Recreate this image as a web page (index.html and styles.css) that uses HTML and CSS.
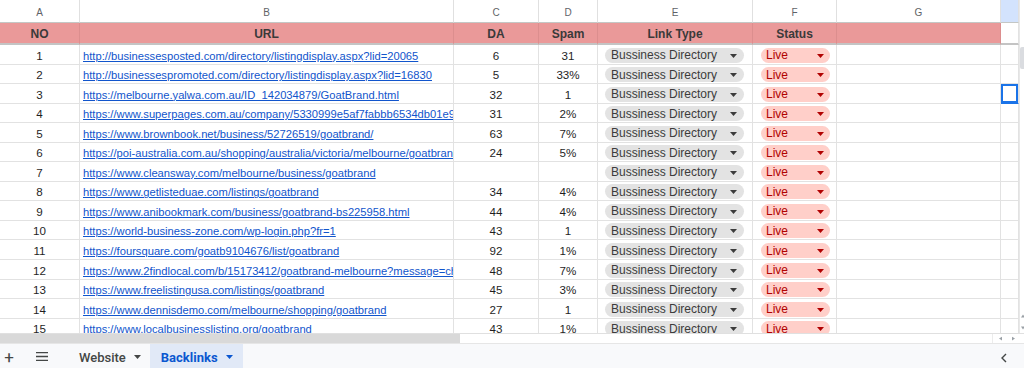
FILE: index.html
```html
<!DOCTYPE html>
<html>
<head>
<meta charset="utf-8">
<link rel="stylesheet" href="styles.css">
</head>
<body>
<div class="app">
  <div class="sheet">
    <div class="grid">
      <div class="c col">A</div><div class="c col">B</div><div class="c col">C</div><div class="c col">D</div><div class="c col">E</div><div class="c col">F</div><div class="c col">G</div><div class="c col col-sel"></div>

      <div class="c hd">NO</div><div class="c hd">URL</div><div class="c hd">DA</div><div class="c hd">Spam</div><div class="c hd">Link Type</div><div class="c hd">Status</div><div class="c hd"></div><div class="c hd hd-blank"></div>

      <div class="c num">1</div><div class="c url"><a>http://businessesposted.com/directory/listingdisplay.aspx?lid=20065</a></div><div class="c num">6</div><div class="c num">31</div><div class="c lt"><span class="chip gray">Bussiness Directory<svg viewBox="0 0 7 4"><path d="M0 0h7L3.5 4z"/></svg></span></div><div class="c st"><span class="chip red">Live<svg viewBox="0 0 7 4"><path d="M0 0h7L3.5 4z"/></svg></span></div><div class="c"></div><div class="c"></div>

      <div class="c num">2</div><div class="c url"><a>http://businessespromoted.com/directory/listingdisplay.aspx?lid=16830</a></div><div class="c num">5</div><div class="c num">33%</div><div class="c lt"><span class="chip gray">Bussiness Directory<svg viewBox="0 0 7 4"><path d="M0 0h7L3.5 4z"/></svg></span></div><div class="c st"><span class="chip red">Live<svg viewBox="0 0 7 4"><path d="M0 0h7L3.5 4z"/></svg></span></div><div class="c"></div><div class="c"></div>

      <div class="c num">3</div><div class="c url"><a>https://melbourne.yalwa.com.au/ID_142034879/GoatBrand.html</a></div><div class="c num">32</div><div class="c num">1</div><div class="c lt"><span class="chip gray">Bussiness Directory<svg viewBox="0 0 7 4"><path d="M0 0h7L3.5 4z"/></svg></span></div><div class="c st"><span class="chip red">Live<svg viewBox="0 0 7 4"><path d="M0 0h7L3.5 4z"/></svg></span></div><div class="c"></div><div class="c sel"></div>

      <div class="c num">4</div><div class="c url"><a>https://www.superpages.com.au/company/5330999e5af7fabbb6534db01e9</a></div><div class="c num">31</div><div class="c num">2%</div><div class="c lt"><span class="chip gray">Bussiness Directory<svg viewBox="0 0 7 4"><path d="M0 0h7L3.5 4z"/></svg></span></div><div class="c st"><span class="chip red">Live<svg viewBox="0 0 7 4"><path d="M0 0h7L3.5 4z"/></svg></span></div><div class="c"></div><div class="c"></div>

      <div class="c num">5</div><div class="c url"><a>https://www.brownbook.net/business/52726519/goatbrand/</a></div><div class="c num">63</div><div class="c num">7%</div><div class="c lt"><span class="chip gray">Bussiness Directory<svg viewBox="0 0 7 4"><path d="M0 0h7L3.5 4z"/></svg></span></div><div class="c st"><span class="chip red">Live<svg viewBox="0 0 7 4"><path d="M0 0h7L3.5 4z"/></svg></span></div><div class="c"></div><div class="c"></div>

      <div class="c num">6</div><div class="c url"><a>https://poi-australia.com.au/shopping/australia/victoria/melbourne/goatbrand</a></div><div class="c num">24</div><div class="c num">5%</div><div class="c lt"><span class="chip gray">Bussiness Directory<svg viewBox="0 0 7 4"><path d="M0 0h7L3.5 4z"/></svg></span></div><div class="c st"><span class="chip red">Live<svg viewBox="0 0 7 4"><path d="M0 0h7L3.5 4z"/></svg></span></div><div class="c"></div><div class="c"></div>

      <div class="c num">7</div><div class="c url"><a>https://www.cleansway.com/melbourne/business/goatbrand</a></div><div class="c num"></div><div class="c num"></div><div class="c lt"><span class="chip gray">Bussiness Directory<svg viewBox="0 0 7 4"><path d="M0 0h7L3.5 4z"/></svg></span></div><div class="c st"><span class="chip red">Live<svg viewBox="0 0 7 4"><path d="M0 0h7L3.5 4z"/></svg></span></div><div class="c"></div><div class="c"></div>

      <div class="c num">8</div><div class="c url"><a>https://www.getlisteduae.com/listings/goatbrand</a></div><div class="c num">34</div><div class="c num">4%</div><div class="c lt"><span class="chip gray">Bussiness Directory<svg viewBox="0 0 7 4"><path d="M0 0h7L3.5 4z"/></svg></span></div><div class="c st"><span class="chip red">Live<svg viewBox="0 0 7 4"><path d="M0 0h7L3.5 4z"/></svg></span></div><div class="c"></div><div class="c"></div>

      <div class="c num">9</div><div class="c url"><a>https://www.anibookmark.com/business/goatbrand-bs225958.html</a></div><div class="c num">44</div><div class="c num">4%</div><div class="c lt"><span class="chip gray">Bussiness Directory<svg viewBox="0 0 7 4"><path d="M0 0h7L3.5 4z"/></svg></span></div><div class="c st"><span class="chip red">Live<svg viewBox="0 0 7 4"><path d="M0 0h7L3.5 4z"/></svg></span></div><div class="c"></div><div class="c"></div>

      <div class="c num">10</div><div class="c url"><a>https://world-business-zone.com/wp-login.php?fr=1</a></div><div class="c num">43</div><div class="c num">1</div><div class="c lt"><span class="chip gray">Bussiness Directory<svg viewBox="0 0 7 4"><path d="M0 0h7L3.5 4z"/></svg></span></div><div class="c st"><span class="chip red">Live<svg viewBox="0 0 7 4"><path d="M0 0h7L3.5 4z"/></svg></span></div><div class="c"></div><div class="c"></div>

      <div class="c num">11</div><div class="c url"><a>https://foursquare.com/goatb9104676/list/goatbrand</a></div><div class="c num">92</div><div class="c num">1%</div><div class="c lt"><span class="chip gray">Bussiness Directory<svg viewBox="0 0 7 4"><path d="M0 0h7L3.5 4z"/></svg></span></div><div class="c st"><span class="chip red">Live<svg viewBox="0 0 7 4"><path d="M0 0h7L3.5 4z"/></svg></span></div><div class="c"></div><div class="c"></div>

      <div class="c num">12</div><div class="c url"><a>https://www.2findlocal.com/b/15173412/goatbrand-melbourne?message=check</a></div><div class="c num">48</div><div class="c num">7%</div><div class="c lt"><span class="chip gray">Bussiness Directory<svg viewBox="0 0 7 4"><path d="M0 0h7L3.5 4z"/></svg></span></div><div class="c st"><span class="chip red">Live<svg viewBox="0 0 7 4"><path d="M0 0h7L3.5 4z"/></svg></span></div><div class="c"></div><div class="c"></div>

      <div class="c num">13</div><div class="c url"><a>https://www.freelistingusa.com/listings/goatbrand</a></div><div class="c num">45</div><div class="c num">3%</div><div class="c lt"><span class="chip gray">Bussiness Directory<svg viewBox="0 0 7 4"><path d="M0 0h7L3.5 4z"/></svg></span></div><div class="c st"><span class="chip red">Live<svg viewBox="0 0 7 4"><path d="M0 0h7L3.5 4z"/></svg></span></div><div class="c"></div><div class="c"></div>

      <div class="c num">14</div><div class="c url"><a>https://www.dennisdemo.com/melbourne/shopping/goatbrand</a></div><div class="c num">27</div><div class="c num">1</div><div class="c lt"><span class="chip gray">Bussiness Directory<svg viewBox="0 0 7 4"><path d="M0 0h7L3.5 4z"/></svg></span></div><div class="c st"><span class="chip red">Live<svg viewBox="0 0 7 4"><path d="M0 0h7L3.5 4z"/></svg></span></div><div class="c"></div><div class="c"></div>

      <div class="c num">15</div><div class="c url"><a>https://www.localbusinesslisting.org/goatbrand</a></div><div class="c num">43</div><div class="c num">1%</div><div class="c lt"><span class="chip gray">Bussiness Directory<svg viewBox="0 0 7 4"><path d="M0 0h7L3.5 4z"/></svg></span></div><div class="c st"><span class="chip red">Live<svg viewBox="0 0 7 4"><path d="M0 0h7L3.5 4z"/></svg></span></div><div class="c"></div><div class="c"></div>
    </div>
    <div class="vscroll">
      <div class="vthumb"></div>
      <div class="varrows">
        <svg viewBox="0 0 5 4"><path d="M0 4h5L2.5 0z"/></svg>
        <svg viewBox="0 0 5 4"><path d="M0 0h5L2.5 4z"/></svg>
      </div>
    </div>
  </div>
  <div class="hscroll">
    <div class="hthumb"></div>
    <div class="harrows">
      <svg viewBox="0 0 4 5"><path d="M4 0v5L0 2.5z"/></svg>
      <svg viewBox="0 0 4 5"><path d="M0 0v5L4 2.5z"/></svg>
    </div>
  </div>
  <div class="tabs">
    <div class="tool plus">+</div>
    <div class="tool menu"><svg viewBox="0 0 12 9"><path d="M0 .5h12M0 4.5h12M0 8.5h12"/></svg></div>
    <div class="tab">Website<svg viewBox="0 0 7 4"><path d="M0 0h7L3.5 4z"/></svg></div>
    <div class="tab active">Backlinks<svg viewBox="0 0 7 4"><path d="M0 0h7L3.5 4z"/></svg></div>
    <div class="spacer"></div>
    <div class="collapse"><svg viewBox="0 0 6 10"><path d="M5 1L1 5l4 4"/></svg></div>
  </div>
</div>
</body>
</html>
```

FILE: styles.css
```css
* { box-sizing: border-box; }
html, body { margin: 0; padding: 0; background: #fff; }
body { width: 1024px; height: 368px; overflow: hidden; font-family: Arial, "Liberation Sans", sans-serif; }

.app { display: flex; flex-direction: column; width: 1024px; height: 368px; }

.sheet { display: flex; height: 333px; overflow: hidden; flex: none; }

.grid {
  width: 1019px;
  display: grid;
  grid-template-columns: 80px 374px 85px 59px 155px 84px 164px 18px;
  grid-template-rows: 23px 22px;
  grid-auto-rows: 19.55px;
  align-content: start;
}

.c {
  border-right: 1px solid #e2e2e2;
  border-bottom: 1px solid #e2e2e2;
  overflow: hidden;
  white-space: nowrap;
  display: flex;
  align-items: flex-end;
  padding: 0 3px 1px;
  font-size: 12px;
  line-height: 14px;
  color: #1f1f1f;
  min-width: 0;
}

.col {
  border-bottom: 1px solid #c4c7c5;
  justify-content: center;
  align-items: center;
  padding: 3px 0 0;
  font-size: 10px;
  color: #5f6368;
  border-right-color: #e0e0e0;
}
.col-sel { background: #d3e3fd; }

.hd {
  background: #ea9999;
  border-bottom: 2px solid #c4c4c4;
  border-right-color: #dc8e8e;
  justify-content: center;
  align-items: center;
  padding: 2px 0 0;
  font-weight: bold;
  color: #3a3a3a;
}
.hd-blank { background: #fff; border-right-color: #e2e2e2; }

.num { justify-content: center; font-size: 11.6px; padding-bottom: 1px; }
.url { padding-left: 3px; font-size: 11.2px; padding-bottom: 1px; }
.url a { color: #1155cc; text-decoration: underline; cursor: pointer; }

.lt { padding: 0 8px 1px 7px; }
.st { padding: 0 6px 1px 8px; }

.chip {
  width: 100%;
  height: 15px;
  border-radius: 8px;
  display: flex;
  align-items: center;
  justify-content: space-between;
  padding: 1px 7px 0 6px;
  font-size: 12px;
  line-height: 15px;
}
.chip svg { width: 7px; height: 4px; flex: none; }
.gray { background: #e3e3e3; color: #3c3c3c; }
.gray svg { fill: #3c3c3c; }
.red { background: #ffcfc9; color: #b10202; padding-left: 5px; padding-right: 6px; }
.red svg { fill: #b10202; }

.sel { box-shadow: inset 0 0 0 2px #1a73e8; border-bottom: 1px solid #1a73e8; }

.vscroll {
  width: 5px;
  display: flex;
  flex-direction: column;
  justify-content: space-between;
  background: #fff;
  border-left: 1px solid #e8e8e8;
}
.vthumb { margin-top: 47px; height: 22px; background: #dadce0; border-radius: 2px 0 0 2px; }
.varrows { display: flex; flex-direction: column; gap: 8px; padding: 0 0 3px 1px; }
.varrows svg { width: 4px; height: 4px; fill: #9aa0a6; }

.hscroll {
  height: 10px;
  flex: none;
  display: flex;
  align-items: stretch;
  border-top: 1px solid #e0e0e0;
  background: #fff;
}
.hthumb { width: 460px; background: #d9d9d9; }
.harrows { margin-left: auto; display: flex; align-items: center; gap: 10px; padding-right: 9px; border-left: 1px solid #ececec; padding-left: 6px; }
.harrows svg { width: 3px; height: 5px; fill: #9aa0a6; }

.tabs {
  flex: 1;
  display: flex;
  align-items: stretch;
  background: #f8f9fb;
  border-top: 1px solid #e6e6e6;
  font-family: Roboto, "Noto Sans", sans-serif;
}
.tool { display: flex; align-items: center; justify-content: center; color: #444746; }
.plus { width: 18px; font-size: 17px; font-weight: 400; padding-top: 2px; }
.menu { width: 48px; }
.menu svg { width: 12px; height: 9px; stroke: #444746; stroke-width: 1.3; fill: none; }
.tab {
  display: flex;
  align-items: center;
  gap: 8px;
  font-size: 13px;
  font-weight: 500;
  color: #444746;
  padding: 2px 9px 0 13px;
  margin-right: 0;
}
.tab svg { width: 7px; height: 4px; fill: #444746; }
.tab.active { background: #e1e9f7; color: #0b57d0; font-weight: bold; padding-left: 11px; padding-right: 10px; }
.tab.active svg { fill: #0b57d0; }
.spacer { flex: 1; }
.collapse { width: 40px; display: flex; align-items: center; justify-content: center; padding-top: 4px; }
.collapse svg { width: 6px; height: 10px; stroke: #444746; stroke-width: 1.4; fill: none; }
```
